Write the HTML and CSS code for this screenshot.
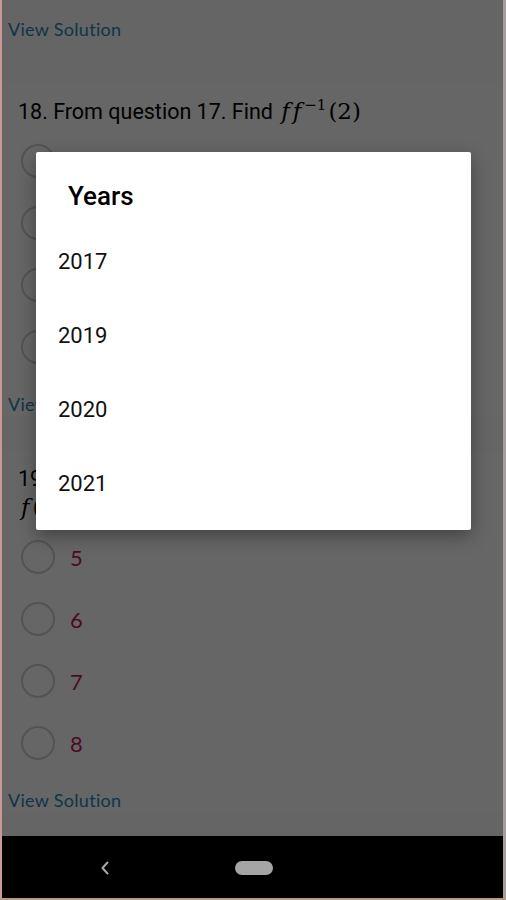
FILE: index.html
```html
<!DOCTYPE html>
<html lang="en">

<head>
  <meta charset="UTF-8">
  <meta name="viewport" content="width=device-width, initial-scale=1.0">
  <title>Quiz - Years</title>
  <link rel="stylesheet" href="styles.css">
</head>

<body>

  <div class="device">
    <div class="screen">

      <!-- Quiz content (behind the dialog) -->
      <div class="content">
        <a class="view-solution">View Solution</a>

        <!-- Question 18 -->
        <div class="question">
          <div class="q-text">18. From question 17. Find <span class="math"><i>f</i><i>f</i><sup>−1</sup>(2)</span></div>
          <div class="options">
            <div class="option"><span class="radio"></span><span class="opt-label">1</span></div>
            <div class="option"><span class="radio"></span><span class="opt-label">2</span></div>
            <div class="option"><span class="radio"></span><span class="opt-label">3</span></div>
            <div class="option"><span class="radio"></span><span class="opt-label">4</span></div>
          </div>
          <a class="view-solution">View Solution</a>
        </div>

        <!-- Question 19 -->
        <div class="question">
          <div class="q-text">19. If <span class="math"><i>f</i>(<i>x</i>) = <i>x</i> + 3</span>, find the value of</div>
          <div class="q-text"><span class="math"><i>f</i>(<i>f</i>(−1))</span></div>
          <div class="options">
            <div class="option"><span class="radio"></span><span class="opt-label">5</span></div>
            <div class="option"><span class="radio"></span><span class="opt-label">6</span></div>
            <div class="option"><span class="radio"></span><span class="opt-label">7</span></div>
            <div class="option"><span class="radio"></span><span class="opt-label">8</span></div>
          </div>
          <a class="view-solution">View Solution</a>
        </div>
      </div>

      <!-- Dim background + Years dialog -->
      <div class="overlay">
        <div class="dialog">
          <div class="dialog-title">Years</div>
          <div class="year-list">
            <div class="year-item">2017</div>
            <div class="year-item">2019</div>
            <div class="year-item">2020</div>
            <div class="year-item">2021</div>
          </div>
        </div>
      </div>
    </div>

    <!-- Android navigation bar -->
    <div class="nav-bar">
      <svg class="nav-back" width="12" height="16" viewBox="0 0 12 16">
        <path d="M8.5 2.5 L3.5 8 L8.5 13.5" fill="none" stroke="#a8a8a8" stroke-width="2" stroke-linecap="round" stroke-linejoin="round"/>
      </svg>
      <span class="nav-home"></span>
    </div>
  </div>

</body>

</html>
```

FILE: styles.css
```css
/* Page / Device Frame */
body {
  margin: 0;
  background: #b89a80;
}

.device {
  width: 501px;
  height: 898px;
  border-left: 2px solid #cc9898;
  border-right: 3px solid #a99c9c;
  display: flex;
  flex-direction: column;
  overflow: hidden;
}

/* Screen */
.screen {
  position: relative;
  height: 836px;
  background: #fcfcfc;
  overflow: hidden;
}

.content {
  padding-top: 17px;
  font-family: Roboto, "Liberation Sans", sans-serif;
}

/* View Solution link */
.view-solution {
  display: block;
  margin-left: 6px;
  font-family: Lato, "Noto Sans", sans-serif;
  font-size: 18px;
  letter-spacing: 0.3px;
  line-height: 24px;
  color: #2a86b4;
}

/* Question Card */
.question {
  margin-top: 44px;
  padding-top: 12px;
  background: #fff;
}

.question + .question {
  margin-top: 36px;
}

.q-text {
  padding-left: 16px;
  font-size: 21.5px;
  line-height: 28px;
  color: #000;
  white-space: nowrap;
}

.math {
  font-family: "DejaVu Serif", "Liberation Serif", serif;
  font-size: 23px;
  margin-left: 3px;
}

.math i {
  margin-right: 3px;
}

.math sup {
  font-size: 15px;
  line-height: 0;
  margin-right: 2px;
}

/* Options */
.options {
  padding-top: 4px;
  margin-bottom: 14px;
}

.option {
  display: flex;
  align-items: center;
  height: 62px;
  padding-left: 19px;
}

.radio {
  width: 30px;
  height: 30px;
  border: 2px solid #cfcfcf;
  border-radius: 50%;
}

.opt-label {
  margin-left: 15px;
  font-family: Lato, "Noto Sans", sans-serif;
  font-size: 22px;
  color: #c2185b;
}

/* Dim Background */
.overlay {
  position: absolute;
  top: 0;
  left: 0;
  right: 0;
  bottom: 0;
  background: rgba(0, 0, 0, 0.6);
  padding-top: 152px;
  padding-left: 34px;
}

/* Dialog */
.dialog {
  width: 435px;
  background: #fff;
  border-radius: 2px;
  padding-bottom: 9px;
  box-shadow: 0 6px 18px rgba(0, 0, 0, 0.35);
  font-family: Roboto, "Liberation Sans", sans-serif;
}

.dialog-title {
  padding: 28px 0 0 32px;
  font-size: 26px;
  font-weight: 500;
  line-height: 32px;
  color: #000;
}

.year-list {
  margin-top: 13px;
}

.year-item {
  height: 74px;
  line-height: 74px;
  padding-left: 22px;
  font-size: 22px;
  color: #111;
}

/* Navigation Bar */
.nav-bar {
  height: 62px;
  background: #000;
  display: flex;
  align-items: center;
  padding-left: 97px;
}

.nav-back {
  margin-top: 2px;
}

.nav-home {
  width: 38px;
  height: 14px;
  margin-left: 124px;
  margin-top: 2px;
  border-radius: 7px;
  background: #a5a5a5;
}
```
